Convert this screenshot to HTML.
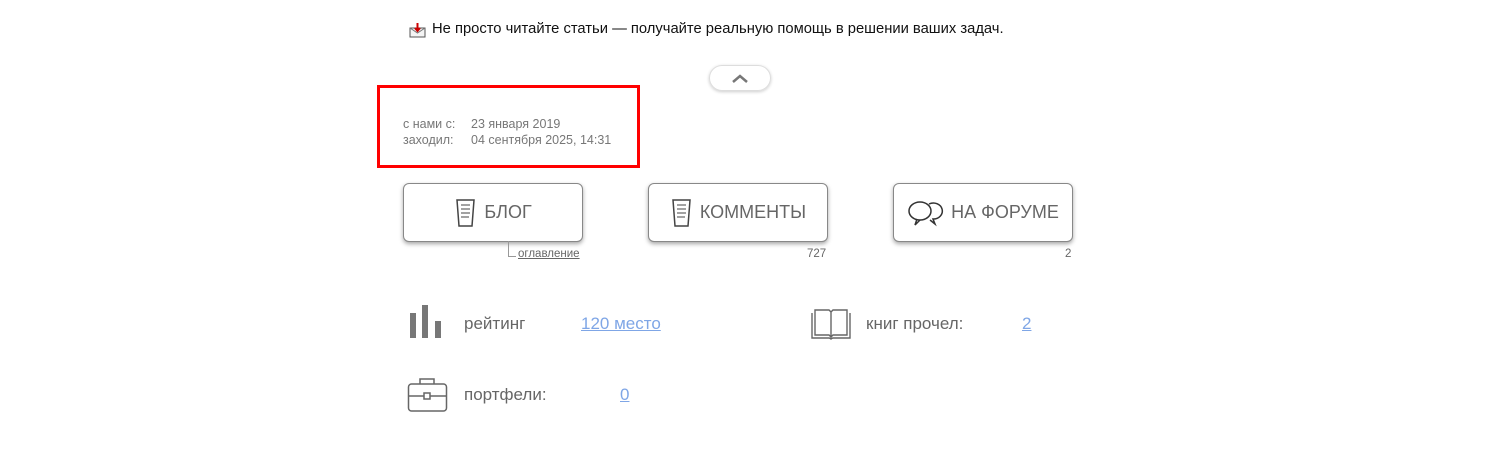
<!DOCTYPE html>
<html><head><meta charset="utf-8"><style>
body{margin:0;width:1495px;height:470px;background:#fff;font-family:"Liberation Sans",sans-serif;position:relative;overflow:hidden}
.a{position:absolute}
.btn{position:absolute;top:183px;width:178px;height:57px;border:1px solid #888;border-radius:6px;box-shadow:0 2px 4px rgba(0,0,0,.35);display:flex;align-items:center;justify-content:center;color:#666;font-size:18px;background:#fff}
.btn svg{margin-right:6px}
.lbl{color:#666;font-size:17px}
.lnk{color:#7fa6e6;font-size:17px;text-decoration:underline}
</style></head><body>
<div class="a" style="left:409px;top:22px;width:17px;height:16px">
<svg width="17" height="16"><rect x="1" y="6" width="15" height="9" fill="#f4f4f4" stroke="#555"/><path d="M1 6l7.5 5 7.5-5" fill="none" stroke="#777"/><path d="M8.5 1v7M6 6l2.5 3 2.5-3" stroke="#c00" stroke-width="2" fill="none"/></svg></div>
<div class="a" style="left:432px;top:21px;font-size:14.75px;color:#111">Не просто читайте статьи — получайте реальную помощь в решении ваших задач.</div>
<div class="a" style="left:709px;top:65px;width:60px;height:24px;border:1px solid #ddd;border-radius:13px;box-shadow:0 1px 3px rgba(0,0,0,.2)">
<svg width="60" height="24"><path d="M23 16l7-6 7 6" fill="none" stroke="#777" stroke-width="2.5"/></svg></div>
<div class="a" style="left:377px;top:85px;width:257px;height:77px;border:3px solid #f00"></div>
<div class="a" style="left:403px;top:116px;font-size:12.5px;color:#777;line-height:16px">с нами с:<br>заходил:</div>
<div class="a" style="left:471px;top:116px;font-size:12.5px;color:#777;line-height:16px">23 января 2019<br>04 сентября 2025, 14:31</div>
<div class="btn" style="left:403px"><svg width="24" height="32"><path d="M3 3h17l-2 26H5z" fill="none" stroke="#444" stroke-width="1.5"/><path d="M7 8h9M7 12h9M7 16h9M7 20h8" stroke="#444"/></svg>БЛОГ</div>
<div class="btn" style="left:648px"><svg width="24" height="32"><path d="M3 3h17l-2 26H5z" fill="none" stroke="#444" stroke-width="1.5"/><path d="M7 8h9M7 12h9M7 16h9M7 20h8" stroke="#444"/></svg>КОММЕНТЫ</div>
<div class="btn" style="left:893px"><svg width="38" height="30"><ellipse cx="13" cy="13" rx="11" ry="9" fill="none" stroke="#333" stroke-width="1.5"/><path d="M10 21l-2 6 5-5" fill="none" stroke="#333" stroke-width="1.5"/><path d="M22 6a9 8 0 1 1 4 15l2 5-5-4" fill="none" stroke="#333" stroke-width="1.5"/></svg>НА ФОРУМЕ</div>
<div class="a" style="left:508px;top:241px;width:7px;height:15px;border-left:1px solid #999;border-bottom:1px solid #999"></div>
<div class="a" style="left:518px;top:248px;font-size:11.5px;color:#666;text-decoration:underline">оглавление</div>
<div class="a" style="left:807px;top:248px;font-size:11.5px;color:#666">727</div>
<div class="a" style="left:1065px;top:248px;font-size:11.5px;color:#666">2</div>
<svg class="a" style="left:409px;top:305px" width="36" height="34"><rect x="1" y="8" width="6" height="25" fill="#777"/><rect x="13" y="0" width="6" height="33" fill="#777"/><rect x="26" y="16" width="6" height="17" fill="#777"/></svg>
<div class="a lbl" style="left:464px;top:314px">рейтинг</div>
<div class="a lnk" style="left:581px;top:314px">120 место</div>
<svg class="a" style="left:809px;top:308px" width="44" height="32"><path d="M3 5v25h17c1 0 2 1 2 1s1-1 2-1h17V5M6 2v25h14l2 2 2-2h14V2H24l-2 2-2-2zM22 4v25" fill="none" stroke="#666" stroke-width="1.4"/></svg>
<div class="a lbl" style="left:866px;top:314px">книг прочел:</div>
<div class="a lnk" style="left:1022px;top:314px">2</div>
<svg class="a" style="left:407px;top:377px" width="44" height="36"><rect x="1.5" y="7" width="38" height="27" rx="3" fill="none" stroke="#666" stroke-width="1.5"/><path d="M13 7V2h14v5M1.5 19h38" fill="none" stroke="#666" stroke-width="1.5"/><rect x="17" y="16" width="6" height="6" fill="#fff" stroke="#666" stroke-width="1.5"/></svg>
<div class="a lbl" style="left:464px;top:385px">портфели:</div>
<div class="a lnk" style="left:620px;top:385px">0</div>
</body></html>
